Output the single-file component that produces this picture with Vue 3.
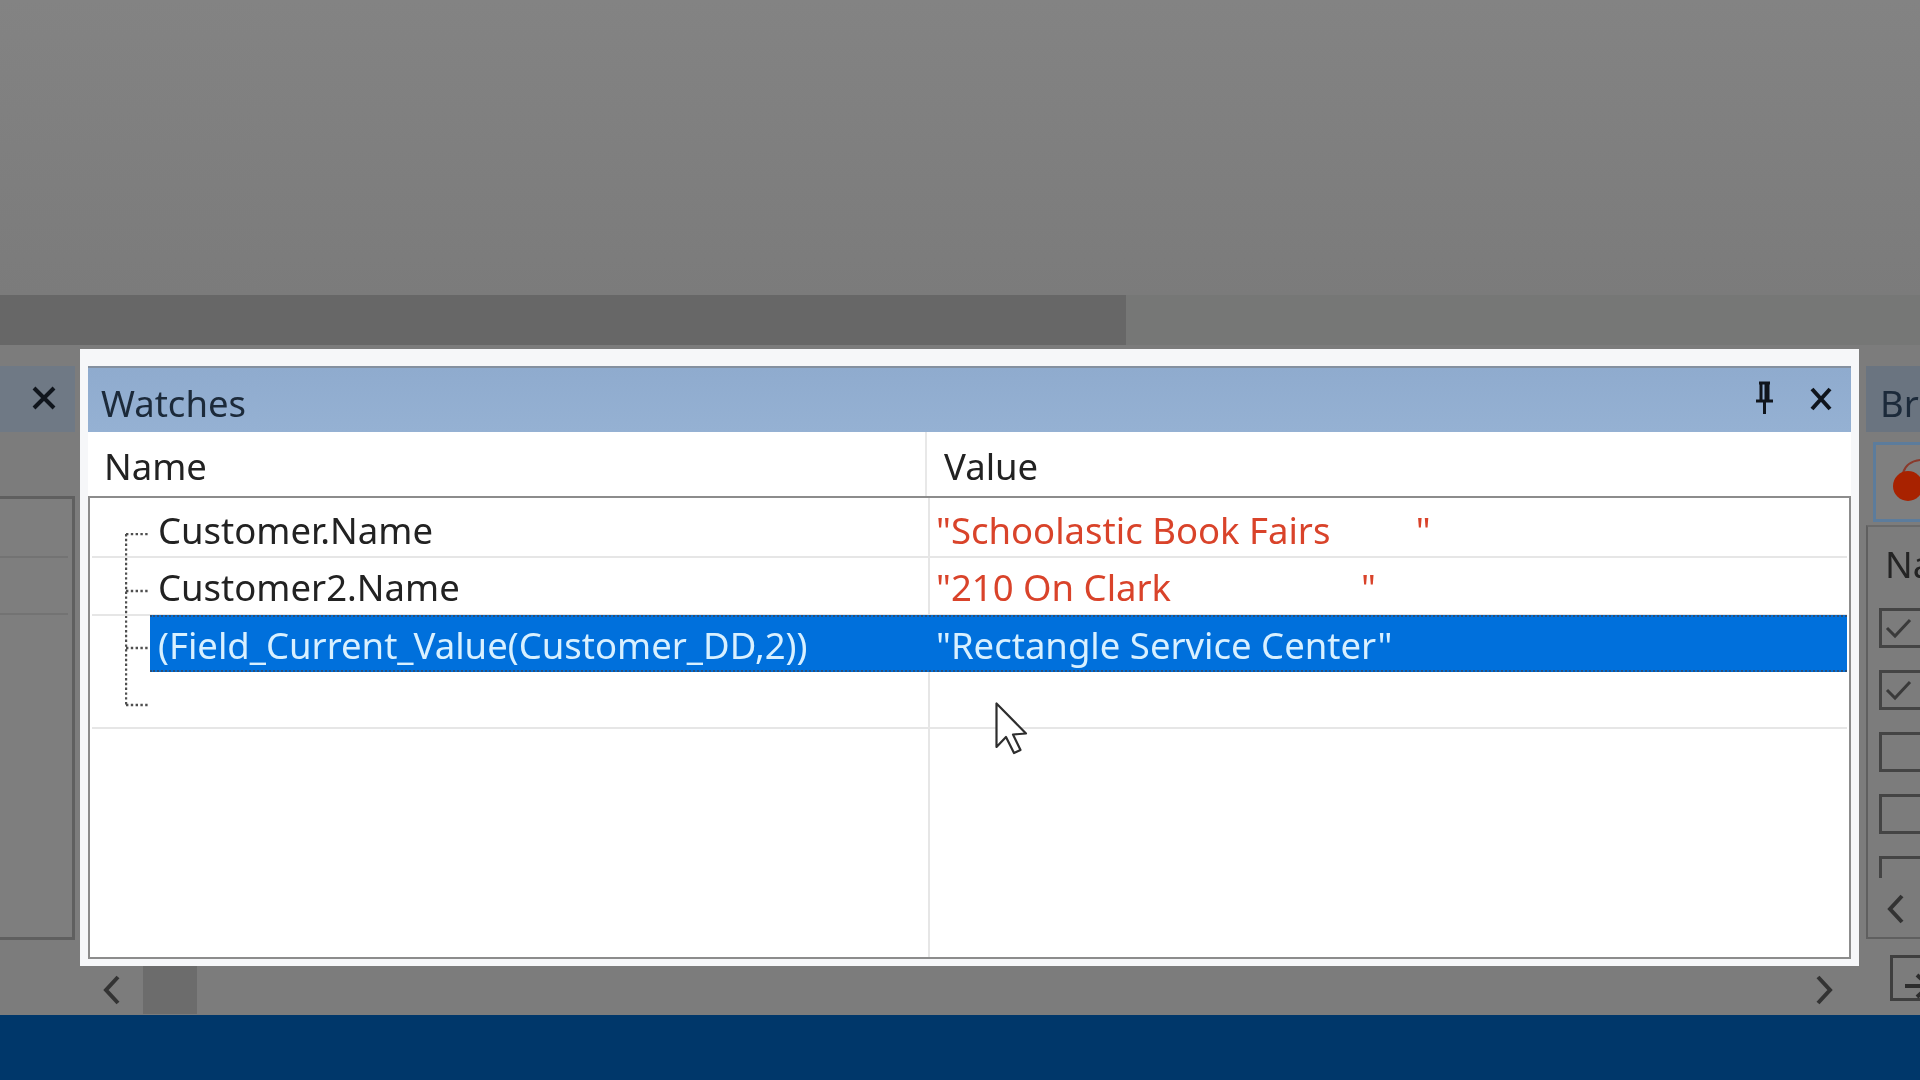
<script setup>
const rows = [
  { name: 'Customer.Name', value: '"Schoolastic Book Fairs         "', selected: false },
  { name: 'Customer2.Name', value: '"210 On Clark                    "', selected: false },
  { name: '(Field_Current_Value(Customer_DD,2))', value: '"Rectangle Service Center"', selected: true },
  { name: '', value: '', selected: false }
]
const boxes = [true, true, false, false]
</script>

<template>
  <div class="page">
    <div class="top"></div>
    <div class="band"><div class="band-dark"></div></div>
    <div class="work">
      <div class="work-main">
        <div class="main">
          <div class="left">
            <div class="left-tab">
              <svg class="x" width="28" height="28" viewBox="0 0 28 28"><path d="M4 4 L24 24 M24 4 L4 24" /></svg>
            </div>
            <div class="left-box">
              <div class="left-line"></div>
              <div class="left-line"></div>
            </div>
          </div>
          <div class="popup">
            <div class="title">
              <span class="title-text">Watches</span>
              <svg class="pin" width="26" height="34" viewBox="0 0 26 34">
                <path d="M8 2 H19 M10 2 V19 M17 2 V19 M5 20 H22 M13.5 20 V33 M15 3 V19" />
              </svg>
              <svg class="x" width="28" height="28" viewBox="0 0 28 28"><path d="M5 4 L23 24 M23 4 L5 24" /></svg>
            </div>
            <div class="head">
              <div class="head-name">Name</div>
              <div class="head-value">Value</div>
            </div>
            <div class="body">
              <div class="divider"></div>
              <svg class="tree" width="30" height="190" viewBox="0 0 30 190">
                <path d="M1 1 V172 M1 1 H24 M1 58 H24 M1 115 H24 M1 172 H24" />
              </svg>
              <div v-for="(r, i) in rows" :key="i" class="row" :class="{ selected: r.selected }">
                <div class="row-name">{{ r.name }}</div>
                <div class="row-value">{{ r.value }}</div>
              </div>
            </div>
          </div>
        </div>
        <div class="scroll">
          <svg class="chev" width="20" height="32" viewBox="0 0 20 32"><path d="M16 3 L4 16 L16 29" /></svg>
          <div class="thumb"></div>
          <div class="spacer"></div>
          <svg class="chev" width="20" height="32" viewBox="0 0 20 32"><path d="M4 3 L16 16 L4 29" /></svg>
        </div>
      </div>
      <div class="right">
        <div class="right-tab">Bre</div>
        <div class="right-btn">
          <svg width="50" height="60" viewBox="0 0 50 60">
            <path class="stem" d="M15 22 C18 12 26 8 40 9" />
            <circle cx="20" cy="35" r="15" fill="#a82200" />
          </svg>
        </div>
        <div class="right-box">
          <div class="right-head">Na</div>
          <div v-for="(c, i) in boxes" :key="i" class="check-row">
            <div class="check">
              <svg v-if="c" width="32" height="32" viewBox="0 0 32 32"><path d="M4 16 L12 24 L27 8" /></svg>
            </div>
          </div>
          <div class="check-cut"></div>
          <div class="right-scroll">
            <svg class="chev" width="20" height="32" viewBox="0 0 20 32"><path d="M16 3 L4 16 L16 29" /></svg>
          </div>
        </div>
        <div class="right-foot">
          <svg width="30" height="32" viewBox="0 0 30 32"><path d="M6 16 H30 M18 5 L30 16 L18 27" /></svg>
        </div>
      </div>
    </div>
    <div class="status"></div>
    <svg class="cursor" width="36" height="54" viewBox="0 0 36 54">
      <path d="M1.5 1.5 V45 L11 35 L19 51 L25.5 48 L18 32.5 L31 31.5 Z" />
    </svg>
  </div>
</template>

<style>
html, body { margin: 0; background: #7d7d7d; }
</style>

<style scoped>
.page {
  width: 1920px;
  height: 1080px;
  position: relative;
  overflow: hidden;
  display: flex;
  flex-direction: column;
  background: #7c7c7c;
  font-family: "Noto Sans", "Open Sans", sans-serif;
  font-size: 36.5px;
  line-height: 50px;
  filter: blur(0.7px);
}
.top {
  height: 295px;
  flex: none;
  background: linear-gradient(#838383, #7b7b7b);
}
.band {
  height: 50px;
  flex: none;
  background: #767776;
}
.band-dark {
  width: 1126px;
  height: 100%;
  background: #676767;
}
.work {
  flex: none;
  height: 670px;
  display: flex;
  background: #7c7c7c;
}
.work-main {
  width: 1866px;
  flex: none;
  display: flex;
  flex-direction: column;
}
.main {
  display: flex;
  height: 621px;
  flex: none;
}
.left {
  width: 80px;
  flex: none;
  padding-top: 21px;
  box-sizing: border-box;
}
.left-tab {
  width: 75px;
  height: 66px;
  background: #6f7985;
  display: flex;
  align-items: center;
  justify-content: flex-end;
  padding: 0 17px 2px 0;
  box-sizing: border-box;
}
.left-box {
  width: 75px;
  height: 444px;
  margin-top: 64px;
  box-sizing: border-box;
  background: #7e7e7e;
  border-top: 3px solid #5f5f5f;
  border-right: 3px solid #5f5f5f;
  border-bottom: 3px solid #5f5f5f;
  padding-top: 57px;
}
.left-line {
  height: 2px;
  background: #737373;
  margin-bottom: 55px;
  margin-right: 4px;
}
.x path {
  fill: none;
  stroke: #10151c;
  stroke-width: 4;
}
.popup {
  width: 1779px;
  flex: none;
  margin-top: 4px;
  height: 617px;
  box-sizing: border-box;
  background: #f6f7f9;
  padding: 17px 8px 7px;
  display: flex;
  flex-direction: column;
}
.title {
  height: 66px;
  flex: none;
  background: linear-gradient(#8fabce, #95b1d3);
  border-top: 2px solid #84909f;
  box-sizing: border-box;
  display: flex;
  align-items: center;
  padding: 0 16px 0 13px;
  color: #1c2a3a;
}
.title-text {
  flex: 1;
  padding-top: 6px;
}
.pin {
  margin-right: 30px;
  margin-top: -4px;
}
.pin path {
  fill: none;
  stroke: #10151c;
  stroke-width: 3;
}
.title .x {
  margin-top: -2px;
}
.head {
  height: 64px;
  flex: none;
  display: flex;
  background: #fff;
  color: #222;
}
.head-name {
  width: 839px;
  flex: none;
  box-sizing: border-box;
  padding: 9px 0 0 16px;
  border-right: 2px solid #e8e8e8;
}
.head-value {
  padding: 9px 0 0 17px;
}
.body {
  position: relative;
  flex: 1;
  background: #fff;
  border: 2px solid #8c8c8c;
  padding: 3px 2px 0;
  box-sizing: border-box;
}
.divider {
  position: absolute;
  left: 838px;
  top: 0;
  bottom: 0;
  width: 2px;
  background: #e6e6e6;
}
.tree {
  position: absolute;
  left: 35px;
  top: 35px;
}
.tree path {
  fill: none;
  stroke: #4f4f4f;
  stroke-width: 2.4;
  stroke-dasharray: 2.4 2.4;
}
.row {
  position: relative;
  height: 57.3px;
  box-sizing: border-box;
  border-bottom: 2px solid #e6e6e6;
  display: flex;
  align-items: center;
  padding-top: 3px;
  color: #222;
  white-space: pre;
}
.row-name {
  width: 844px;
  flex: none;
  box-sizing: border-box;
  padding-left: 66px;
}
.row-value {
  color: #d9432a;
}
.row.selected {
  background: #0070dc;
  margin-left: 58px;
  border-top: 2px dotted #2b4f78;
  border-bottom: 2px dotted #2b4f78;
  color: #d8f0ff;
  margin-top: -1px;
}
.selected .row-name {
  width: 786px;
  padding-left: 8px;
}
.selected .row-value {
  color: #d8f0ff;
}
.scroll {
  flex: 1;
  display: flex;
  align-items: center;
  padding: 0 32px 7px 102px;
}
.chev path {
  fill: none;
  stroke: #333;
  stroke-width: 4;
}
.scroll .thumb {
  width: 54px;
  height: 48px;
  margin-left: 21px;
  background: #6c6c6c;
}
.spacer {
  flex: 1;
}
.right {
  width: 54px;
  flex: none;
  padding-top: 21px;
  box-sizing: border-box;
  overflow: hidden;
}
.right-tab {
  height: 66px;
  width: 70px;
  box-sizing: border-box;
  padding: 12px 0 0 14px;
  background: #6a7480;
  color: #1c2a3a;
}
.right-btn {
  margin: 10px 0 0 7px;
  width: 70px;
  height: 80px;
  box-sizing: border-box;
  border: 3px solid #5c7c9c;
  padding: 6px 0 0 12px;
  background: #7f7f7f;
}
.stem {
  fill: none;
  stroke: #8a3a2c;
  stroke-width: 2;
}
.right-box {
  margin-top: 3px;
  height: 414px;
  width: 70px;
  box-sizing: border-box;
  border-left: 2px solid #5f5f5f;
  border-top: 2px solid #6a6a6a;
  border-bottom: 2px solid #5f5f5f;
  padding-left: 11px;
  position: relative;
  overflow: hidden;
}
.right-head {
  height: 81px;
  padding-top: 12px;
  padding-left: 6px;
  box-sizing: border-box;
  color: #242424;
}
.check-row {
  height: 62px;
}
.check {
  width: 60px;
  height: 40px;
  box-sizing: border-box;
  border: 3px solid #444;
  padding: 1px;
}
.check svg {
  display: block;
}
.check path {
  fill: none;
  stroke: #3a3a3a;
  stroke-width: 3;
}
.check-cut {
  width: 60px;
  height: 22px;
  box-sizing: border-box;
  border: 3px solid #444;
  border-bottom: none;
}
.right-scroll {
  position: absolute;
  left: 0;
  right: 0;
  bottom: 0;
  height: 57px;
  background: #7b7b7b;
  padding-left: 18px;
  display: flex;
  align-items: center;
}
.right-foot {
  margin: 16px 0 0 24px;
  width: 70px;
  height: 46px;
  box-sizing: border-box;
  border: 3px solid #3f3f3f;
  padding: 5px 0 0 6px;
}
.right-foot path {
  fill: none;
  stroke: #2d2d2d;
  stroke-width: 4;
}
.status {
  flex: 1;
  background: #00376a;
}
.cursor {
  position: absolute;
  left: 995px;
  top: 702px;
}
.cursor path {
  fill: #fff;
  stroke: #2e2e2e;
  stroke-width: 2.2;
  stroke-linejoin: round;
}
</style>
